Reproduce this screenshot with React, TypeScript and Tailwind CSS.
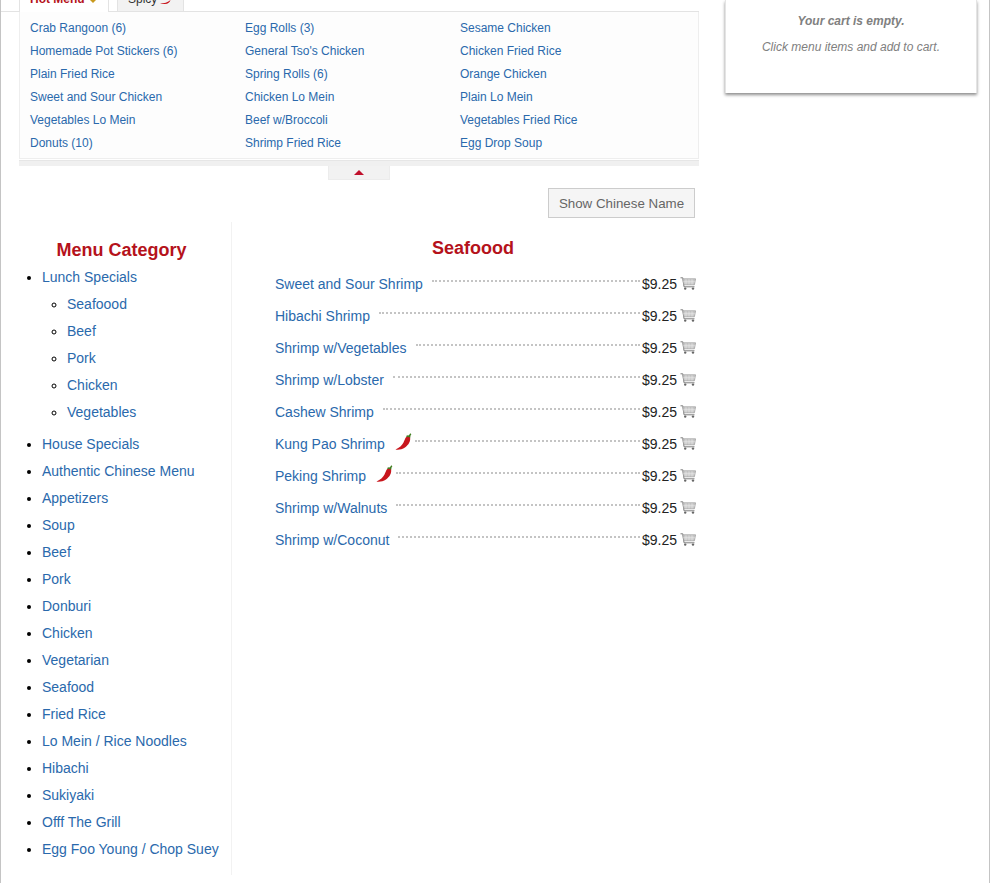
import React from 'react';

const hotItems = [
  ['Crab Rangoon (6)', 'Egg Rolls (3)', 'Sesame Chicken'],
  ['Homemade Pot Stickers (6)', "General Tso's Chicken", 'Chicken Fried Rice'],
  ['Plain Fried Rice', 'Spring Rolls (6)', 'Orange Chicken'],
  ['Sweet and Sour Chicken', 'Chicken Lo Mein', 'Plain Lo Mein'],
  ['Vegetables Lo Mein', 'Beef w/Broccoli', 'Vegetables Fried Rice'],
  ['Donuts (10)', 'Shrimp Fried Rice', 'Egg Drop Soup'],
];

const lunchSub = ['Seafoood', 'Beef', 'Pork', 'Chicken', 'Vegetables'];

const categories = [
  'House Specials', 'Authentic Chinese Menu', 'Appetizers', 'Soup', 'Beef', 'Pork', 'Donburi', 'Chicken',
  'Vegetarian', 'Seafood', 'Fried Rice', 'Lo Mein / Rice Noodles', 'Hibachi', 'Sukiyaki', 'Offf The Grill',
  'Egg Foo Young / Chop Suey',
];

const dishes = [
  { name: 'Sweet and Sour Shrimp' },
  { name: 'Hibachi Shrimp' },
  { name: 'Shrimp w/Vegetables' },
  { name: 'Shrimp w/Lobster' },
  { name: 'Cashew Shrimp' },
  { name: 'Kung Pao Shrimp', spicy: true },
  { name: 'Peking Shrimp', spicy: true },
  { name: 'Shrimp w/Walnuts' },
  { name: 'Shrimp w/Coconut' },
];

const Chili: React.FC<{ className?: string }> = ({ className }) => (
  <svg viewBox="0 0 18 18" className={className}>
    <path d="M15 4C16 8 13.5 12 10 14.5 7 16.5 3.5 17 0.5 16.5 4.5 14.5 7 12.5 8.5 9.5 9.4 7.5 10 5.5 11 4.2 12.2 3 14 3 15 4Z" fill="#c8161d" />
    <path d="M11.5 3.6C12.4 3 13.6 3 14.6 3.6 14.7 2.6 15.1 1.6 15.8 0.8" fill="none" stroke="#3f7d20" strokeWidth="1.5" />
  </svg>
);

const Cart: React.FC = () => (
  <svg viewBox="0 0 16 13" className="w-4 h-[13px] -mt-0.5 shrink-0">
    <path d="M0.5 0.8H2.8L4 9.8H14.5" fill="none" stroke="#7d7d7d" strokeWidth="1" />
    <path d="M2.8 1.8H15.6L14.4 7.8H3.7Z" fill="#c9c9c9" stroke="#9a9a9a" strokeWidth="0.7" />
    <path d="M6 2.2V7.5M9 2.2V7.5M12 2.2V7.5M3.2 4.8H15" stroke="#ececec" strokeWidth="0.6" />
    <circle cx="5.2" cy="11.6" r="1.2" fill="#666" />
    <circle cx="13" cy="11.6" r="1.2" fill="#666" />
  </svg>
);

const App: React.FC = () => {
  return (
    <div className="h-[883px] overflow-hidden bg-white border-x border-[#c4c4c4] flex font-['Liberation_Sans',Arial,sans-serif] text-sm text-[#333]">
      <div className="w-[698px] shrink-0">
        {/* tabs, scrolled partly off the top */}
        <div className="h-3 pl-[18px] flex gap-2 border-b border-[#e3e3e3] text-xs">
          <div className="w-[90px] h-3 shrink-0 bg-white border-x border-[#e3e3e3] pl-[10px] flex gap-[5px] overflow-hidden font-bold text-[#b5121b]">
            <span className="-mt-[9px] leading-4 whitespace-nowrap">Hot Menu</span>
            <svg viewBox="0 0 6 3" className="w-1.5 h-[3px] shrink-0">
              <path d="M0 0H6L3 3Z" fill="#c99a1e" />
            </svg>
          </div>
          <div className="w-[67px] h-[11px] shrink-0 bg-[#f2f2f2] border-x border-[#e3e3e3] pl-[10px] flex gap-[3px] overflow-hidden">
            <span className="-mt-[9px] leading-4">Spicy</span>
            <svg viewBox="0 0 11 4" className="w-[11px] h-1 shrink-0">
              <path d="M0 3.5C4 3.5 8 2.5 10.5 0 10 2 8 4 5 4 3 4 1 4 0 3.5Z" fill="#c8161d" />
            </svg>
          </div>
        </div>

        <div className="ml-[18px] w-[680px] h-[147px] bg-[#fdfdfd] border-x border-b border-[#eeeeee] pl-[10px] pt-[5px] grid grid-cols-[215px_215px_215px] auto-rows-[23px] text-xs text-[#2a69ac]">
          {hotItems.flat().map(item => (
            <a key={item} className="leading-[23px] whitespace-nowrap">{item}</a>
          ))}
        </div>
        <div className="ml-[18px] w-[680px] h-[6px] mt-px bg-[#f0f0f0] border-t border-[#e6e6e6]" />
        <div className="ml-[327px] w-[62px] h-[14px] bg-[#f2f2f2] border-x border-b border-[#ececec] flex justify-center pt-1">
          <div className="w-0 h-0 border-x-[5px] border-x-transparent border-b-[5px] border-b-[#c0102c]" />
        </div>

        <div className="flex justify-end pr-1 mt-2 h-[30px]">
          <button className="w-[147px] h-[30px] pt-px bg-[#f5f5f5] border border-[#cccccc] text-[13.33px] text-[#666]">Show Chinese Name</button>
        </div>

        <div className="flex mt-1">
          <div className="w-[231px] h-[653px] shrink-0 border-r border-[#f2f2f2]">
            <h2 className="w-[241px] text-center text-lg font-bold text-[#b5121b] leading-[20px] pt-[18px] pb-[4px]">Menu Category</h2>
            <ul className="list-disc pl-[41px] text-[#2a69ac] marker:text-black">
              <li className="h-[27px] leading-[27px]">Lunch Specials</li>
              <ul className="list-[circle] pl-[25px] pb-[5px] marker:text-black">
                {lunchSub.map(name => (
                  <li key={name} className="h-[27px] leading-[27px]">{name}</li>
                ))}
              </ul>
              {categories.map(name => (
                <li key={name} className="h-[27px] leading-[27px] whitespace-nowrap">{name}</li>
              ))}
            </ul>
          </div>

          <div className="w-[466px] shrink-0">
            <h2 className="text-center pl-[18px] pr-[2px] text-lg font-bold text-[#b5121b] leading-[20px] pt-[16px] pb-[10px]">Seafoood</h2>
            <div className="pl-[43px] pr-[2px]">
              {dishes.map(dish => (
                <div key={dish.name} className="h-8 flex items-center">
                  <span className="text-[#2a69ac] whitespace-nowrap">{dish.name}</span>
                  {dish.spicy && <Chili className="w-[18px] h-[18px] ml-[10px] -mt-1 shrink-0" />}
                  <span className={`flex-1 mr-[2px] -mt-[7px] border-b-2 border-dotted border-[#c4c4c4] ${dish.spicy ? 'ml-[2px]' : 'ml-[9px]'}`} />
                  <span className="text-[#222] mr-[3px]">$9.25</span>
                  <Cart />
                </div>
              ))}
            </div>
          </div>
        </div>
      </div>

      <div className="ml-[26px] w-[252px] h-[93px] shrink-0 bg-white border-x border-[#e4e4e4] shadow-[0_2px_3px_rgba(0,0,0,0.45)] text-center text-xs italic text-[#808080]">
        <p className="font-bold pt-[14px] leading-[14px]">Your cart is empty.</p>
        <p className="pt-3 leading-[14px]">Click menu items and add to cart.</p>
      </div>
    </div>
  );
};

export default App;
